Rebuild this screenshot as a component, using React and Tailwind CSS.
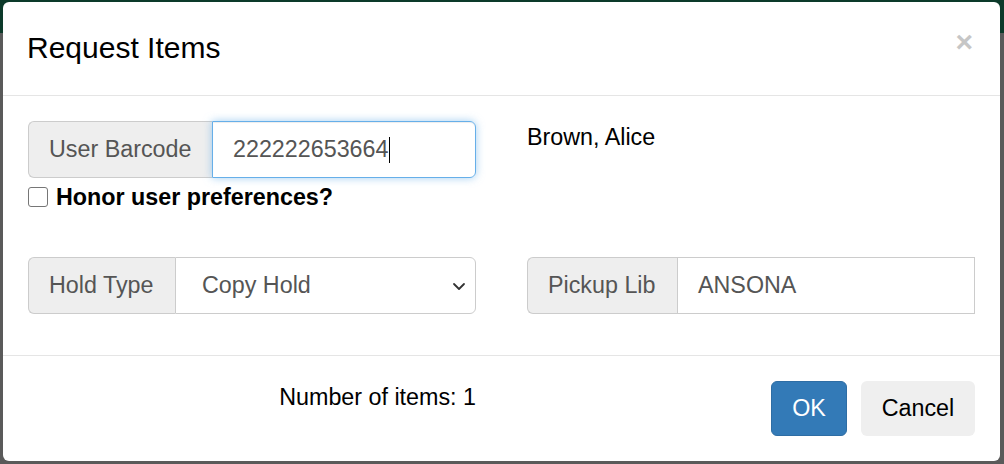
// Request Items modal (Bootstrap-like dialog over a dimmed page)

const FONT = { fontFamily: '"Liberation Sans", Arial, sans-serif' };

function InputGroup({ label, addonWidth, children }) {
  return (
    <div className="flex h-[57px] w-full">
      <div
        className="flex items-center shrink-0 px-[20px] bg-[#eeeeee] border border-r-0 border-[#cccccc] rounded-l-[6px] text-[#555555] text-[23.3px]"
        style={{ width: addonWidth }}
      >
        {label}
      </div>
      {children}
    </div>
  );
}

export default function App() {
  return (
    <div
      className="relative w-[1004px] h-[464px] overflow-hidden bg-[linear-gradient(#0c3a2a_0,#0c3a2a_33px,#5a5a5a_33px)]"
      style={FONT}
    >
      {/* Modal */}
      <div className="absolute left-[3px] top-[2px] w-[997px] h-[459px] bg-white rounded-[6px] flex flex-col overflow-hidden">
        {/* Header */}
        <div className="h-[94px] shrink-0 flex items-center justify-between pl-[24px] pr-[27px] border-b border-[#e5e5e5]">
          <h4 className="text-[30px] leading-[34px] text-black pb-[2px]">Request Items</h4>
          <span className="text-[30px] leading-none font-bold text-[#c6c6c6] -mt-[14px]">×</span>
        </div>

        {/* Body */}
        <div className="h-[260px] shrink-0 px-[25px] pt-[25px] border-b border-[#e5e5e5] text-black text-[23.3px]">
          <div className="grid grid-cols-2 gap-x-[51px]">
            <div>
              <InputGroup label="User Barcode" addonWidth="184px">
                <div className="flex-1 flex items-center pl-[20px] border border-[#66afe9] rounded-r-[6px] text-[#555555] shadow-[inset_0_1px_1px_rgba(0,0,0,0.075),0_0_8px_rgba(102,175,233,0.6)]">
                  <span>222222653664</span>
                  <span className="w-px h-[26px] bg-black ml-px" />
                </div>
              </InputGroup>
              <label className="flex items-center gap-[8px] mt-[8px] h-[22px]">
                <span className="w-[20px] h-[20px] shrink-0 border border-[#767676] rounded-[3px] bg-white" />
                <span className="font-bold leading-[22px]">Honor user preferences?</span>
              </label>
            </div>
            <div className="pt-[3px] leading-[26px]">Brown, Alice</div>
          </div>

          <div className="grid grid-cols-2 gap-x-[51px] mt-[49px]">
            <InputGroup label="Hold Type" addonWidth="147px">
              <div className="flex-1 flex items-center justify-between pl-[26px] pr-[9px] border border-[#cccccc] rounded-r-[6px] text-[#555555]">
                <span>Copy Hold</span>
                <svg width="14" height="10" viewBox="0 0 14 10" fill="none">
                  <path d="M2 3l5 5 5-5" stroke="#333333" strokeWidth="1.8" strokeLinecap="round" strokeLinejoin="round" />
                </svg>
              </div>
            </InputGroup>
            <InputGroup label="Pickup Lib" addonWidth="150px">
              <div className="flex-1 flex items-center pl-[20px] border border-[#cccccc] text-[#555555]">
                ANSONA
              </div>
            </InputGroup>
          </div>
        </div>

        {/* Footer */}
        <div className="flex-1 px-[25px] pt-[25px]">
          <div className="grid grid-cols-2 gap-x-[51px]">
            <div className="text-right text-[23.3px] leading-[26px] text-black pt-[3px]">Number of items: 1</div>
            <div className="flex justify-end gap-[14px]">
              <button className="h-[55px] w-[76px] rounded-[6px] bg-[#337ab7] border border-[#2e6da4] text-white text-[23.3px]">
                OK
              </button>
              <button className="h-[55px] w-[114px] rounded-[6px] bg-[#efefef] text-black text-[23.3px]">
                Cancel
              </button>
            </div>
          </div>
        </div>
      </div>
    </div>
  );
}
